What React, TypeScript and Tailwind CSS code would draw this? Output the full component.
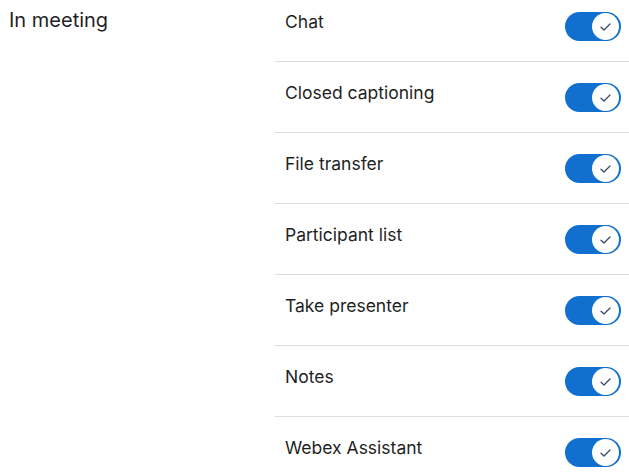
import React from "react";

const items = [
  "Chat",
  "Closed captioning",
  "File transfer",
  "Participant list",
  "Take presenter",
  "Notes",
  "Webex Assistant",
];

function Toggle() {
  return (
    <div className="relative h-[29px] w-[56px] shrink-0 rounded-full bg-[#1170cf]">
      <div className="absolute right-[2px] top-[1px] flex size-[27px] items-center justify-center rounded-full bg-white">
        <svg width="11" height="8" viewBox="0 0 11 8" fill="none">
          <path
            d="M1 4.2 L4 7 L10 1"
            stroke="#3b4a66"
            strokeWidth="1.3"
            strokeLinecap="round"
            strokeLinejoin="round"
          />
        </svg>
      </div>
    </div>
  );
}

export default function App() {
  return (
    <div
      className="flex h-[474px] w-[629px] overflow-hidden bg-white text-[#1f1f1f]"
      style={{ fontFamily: "Inter, 'Noto Sans', sans-serif" }}
    >
      <div className="w-[275px] shrink-0 pl-[9px] pt-[6px]">
        <div className="text-[20px] leading-[28px]">In meeting</div>
      </div>
      <div className="-mt-[9px] flex-1">
        {items.map((label) => (
          <div
            key={label}
            className="flex h-[71px] items-start justify-between border-b border-[#dedede] pl-[10px] pr-[8px] pt-[19px]"
          >
            <span className="text-[17.5px] leading-[24px]">{label}</span>
            <div className="mt-[2px]">
              <Toggle />
            </div>
          </div>
        ))}
      </div>
    </div>
  );
}
